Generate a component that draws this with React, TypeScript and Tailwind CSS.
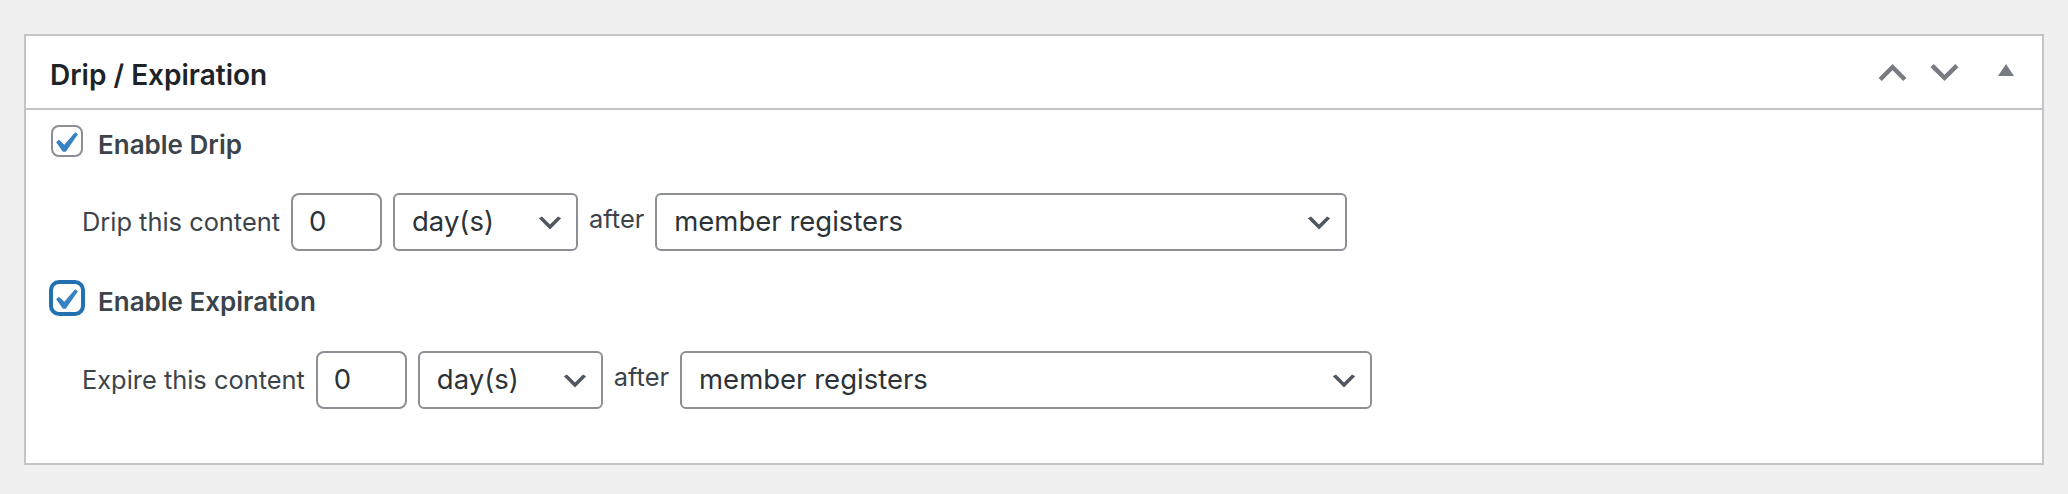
import React from "react";

const font = { fontFamily: "Inter, 'Liberation Sans', sans-serif" };

function Checkbox({ focused }: { focused?: boolean }) {
  return (
    <span
      className={
        "relative inline-block h-[32px] w-[32px] shrink-0 rounded-[8px] border-2 bg-white " +
        (focused ? "border-[#2271b1] shadow-[0_0_0_2px_#2271b1]" : "border-[#8c8f94]")
      }
    >
      <svg className="absolute left-[-9px] top-[-5px] h-[42px] w-[42px]" viewBox="0 0 20 20">
        <path d="M14.83 4.89l1.34.94-5.81 8.38H9.02L5.78 9.67l1.34-1.25 2.57 2.4z" fill="#3582c4" />
      </svg>
    </span>
  );
}

function Select({ value, width }: { value: string; width: string }) {
  return (
    <div
      className={
        "relative flex h-[58px] shrink-0 items-center rounded-[6px] border-2 border-[#8c8f94] bg-white pl-[17px] text-[27.5px] text-[#2c3338] " +
        width
      }
    >
      <span>{value}</span>
      <svg className="absolute right-[10px] top-[12px] h-[32px] w-[32px]" viewBox="0 0 20 20">
        <path d="M5 6l5 5 5-5 2 1-7 7-7-7 2-1z" fill="#50575e" />
      </svg>
    </div>
  );
}

function Row({ label }: { label: string }) {
  return (
    <div className="flex h-[58px] items-center gap-[11px] pl-[56px] text-[25.4px] text-[#3c434a]">
      <span>{label}</span>
      <div className="flex h-[58px] w-[91px] shrink-0 items-center rounded-[8px] border-2 border-[#8c8f94] bg-white pl-[16px] text-[27.5px] text-[#2c3338]">
        0
      </div>
      <Select value="day(s)" width="w-[185px]" />
      <span className="mb-[6px]">after</span>
      <Select value="member registers" width="w-[692px]" />
    </div>
  );
}

function CheckRow({ label, focused, className }: { label: string; focused?: boolean; className?: string }) {
  return (
    <label
      className={
        "flex h-[32px] items-start gap-[15px] pl-[25px] text-[26px] font-semibold text-[#3c434a] " +
        (className ?? "")
      }
    >
      <Checkbox focused={focused} />
      <span className="mt-[4px] leading-[32px]">{label}</span>
    </label>
  );
}

export default function App() {
  return (
    <div className="h-[494px] w-[2068px] bg-[#f0f0f1] px-[24px] pt-[34px]" style={font}>
      <div className="border-2 border-[#c3c4c7] bg-white">
        <div className="flex h-[74px] items-center justify-between border-b-2 border-[#c3c4c7]">
          <h2 className="pl-[24px] pt-[6px] text-[28px] font-semibold text-[#1d2327]">Drip / Expiration</h2>
          <div className="flex h-full items-center">
            <button className="flex h-[72px] w-[52px] items-center justify-center">
              <svg className="h-[43px] w-[43px]" viewBox="0 0 20 20">
                <path d="M15 14l-5-5-5 5-1.5-1.5L10 6l6.5 6.5z" fill="#787c82" />
              </svg>
            </button>
            <button className="flex h-[72px] w-[52px] items-center justify-center">
              <svg className="h-[43px] w-[43px]" viewBox="0 0 20 20">
                <path d="M5 6l5 5 5-5 1.5 1.5L10 14 3.5 7.5z" fill="#787c82" />
              </svg>
            </button>
            <button className="flex h-[72px] w-[72px] items-center justify-center pb-[4px]">
              <svg className="h-[12px] w-[16px]" viewBox="0 0 16 12">
                <path d="M0 12L8 0l8 12z" fill="#787c82" />
              </svg>
            </button>
          </div>
        </div>
        <div className="flex flex-col pb-[54px] pt-[15px]">
          <CheckRow label="Enable Drip" />
          <div className="mt-[36px]">
            <Row label="Drip this content" />
          </div>
          <CheckRow label="Enable Expiration" focused className="mt-[31px]" />
          <div className="mt-[37px]">
            <Row label="Expire this content" />
          </div>
        </div>
      </div>
    </div>
  );
}
